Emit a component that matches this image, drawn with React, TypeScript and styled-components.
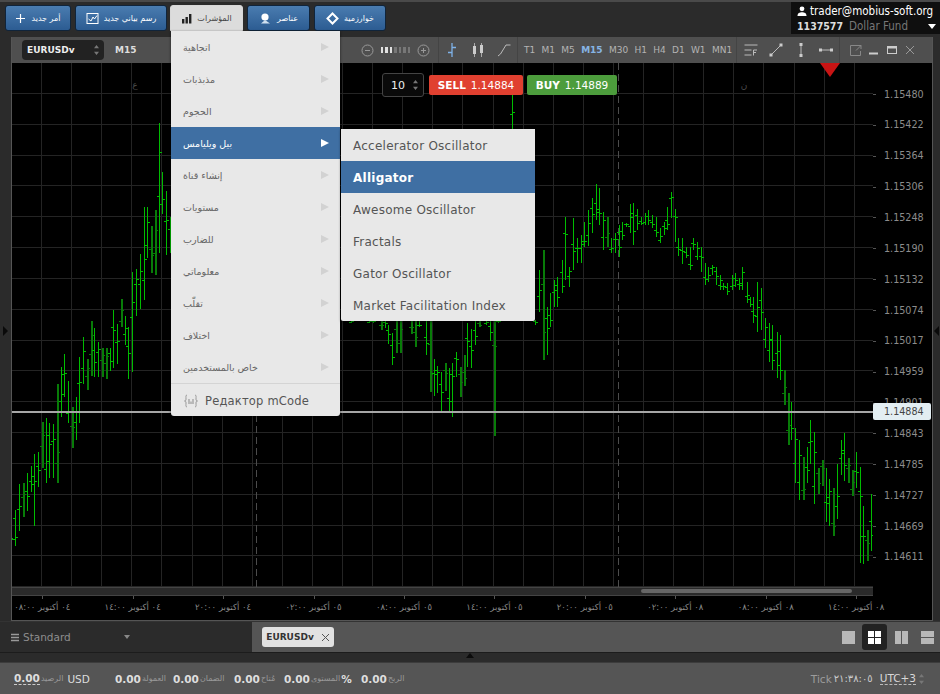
import type { ReactNode } from "react";
import styled, { createGlobalStyle } from "styled-components";

const GlobalStyle = createGlobalStyle`
  html, body, #root {
    margin: 0;
    padding: 0;
    height: 100%;
    background: #2b2b2b;
    overflow: hidden;
    font-family: "DejaVu Sans", sans-serif;
  }
`;

const Page = styled.div`
  width: 940px;
  height: 694px;
  display: flex;
  flex-direction: column;
  background: #2b2b2b;
  border-top: 2px solid #4a4a4a;
  box-sizing: border-box;
`;

const TopBar = styled.div`
  height: 35px;
  display: flex;
  align-items: flex-start;
  padding: 3px 0 0 5px;
  box-sizing: border-box;
  flex-shrink: 0;
`;

const NavButton = styled.div<{ $width: number; $open?: boolean; $after: number }>`
  position: relative;
  width: ${(p) => p.$width}px;
  height: 26px;
  margin-right: ${(p) => p.$after}px;
  box-sizing: border-box;
  display: flex;
  align-items: center;
  justify-content: center;
  gap: 5px;
  border: 1px solid ${(p) => (p.$open ? "#d8d8d8" : "#10243a")};
  border-radius: 3px 3px ${(p) => (p.$open ? "0 0" : "3px 3px")};
  background: ${(p) => (p.$open ? "#dcdcdc" : "linear-gradient(#4a7cb0, #2c5c92)")};
  color: ${(p) => (p.$open ? "#444" : "#fff")};
  font-size: 8px;
  white-space: nowrap;
`;

const Menu = styled.div`
  position: absolute;
  top: 25px;
  left: 0;
  width: 169px;
  background: #e8e8e8;
  border-radius: 0 0 3px 3px;
  box-shadow: 0 1px 3px rgba(0, 0, 0, 0.6);
  z-index: 5;
`;

const MenuRow = styled.div<{ $active?: boolean }>`
  position: relative;
  height: 32px;
  display: flex;
  align-items: center;
  justify-content: space-between;
  padding: 0 11px 0 12px;
  font-size: 9.5px;
  color: ${(p) => (p.$active ? "#fff" : "#666")};
  background: ${(p) => (p.$active ? "#3f6fa3" : "transparent")};
`;

const MenuArrow = styled.span<{ $active?: boolean }>`
  width: 0;
  height: 0;
  border-style: solid;
  border-width: 4px 0 4px 8px;
  border-color: transparent transparent transparent ${(p) => (p.$active ? "#fff" : "#d2d2d2")};
`;

const EditorRow = styled.div`
  height: 33px;
  display: flex;
  align-items: center;
  gap: 6px;
  padding: 1px 0 0 12px;
  box-sizing: border-box;
  border-top: 1px solid #d4d4d4;
  font-size: 11.5px;
  letter-spacing: 0.2px;
  color: #555;
`;

const SubMenu = styled.div`
  position: absolute;
  top: 2px;
  left: 170px;
  width: 194px;
  background: #e8e8e8;
  border-radius: 0 0 2px 2px;
  box-shadow: 0 1px 3px rgba(0, 0, 0, 0.6);
  z-index: 6;
`;

const SubRow = styled.div<{ $active?: boolean }>`
  height: 32px;
  display: flex;
  align-items: center;
  padding: 2px 0 0 12px;
  box-sizing: border-box;
  font-size: 12px;
  letter-spacing: 0.25px;
  font-weight: ${(p) => (p.$active ? 700 : 400)};
  color: ${(p) => (p.$active ? "#fff" : "#555")};
  background: ${(p) => (p.$active ? "#3f6fa3" : "transparent")};
`;

const Account = styled.div`
  margin: -3px 0 0 auto;
  width: 149px;
  height: 32px;
  box-sizing: border-box;
  background: #0f0f0f;
  padding: 1px 0 0 6px;
  font-family: "DejaVu Sans Condensed", "DejaVu Sans", sans-serif;
`;

const AccountUser = styled.div`
  display: flex;
  align-items: center;
  gap: 3px;
  height: 15px;
  color: #fff;
  font-size: 11.5px;
`;

const AccountFund = styled.div`
  display: flex;
  align-items: center;
  gap: 6px;
  height: 16px;
  font-size: 11.5px;
  color: #777;
`;

const AccountId = styled.b`
  color: #ddd;
  font-size: 10.5px;
`;

const FundArrow = styled.span`
  margin-left: auto;
  margin-right: 4px;
  width: 0;
  height: 0;
  border-style: solid;
  border-width: 5px 4px 0 4px;
  border-color: #fff transparent transparent transparent;
`;

const Workspace = styled.div`
  flex: 1;
  display: flex;
  min-height: 0;
`;

const Gutter = styled.div<{ $width: number }>`
  width: ${(p) => p.$width}px;
  flex-shrink: 0;
  display: flex;
  align-items: center;
  justify-content: center;
  background: #2b2b2b;
  padding-top: 4px;
  box-sizing: border-box;
`;

const GutterArrow = styled.span<{ $left?: boolean }>`
  width: 0;
  height: 0;
  border-style: solid;
  border-width: ${(p) => (p.$left ? "5px 5px 5px 0" : "5px 0 5px 5px")};
  border-color: ${(p) =>
    p.$left
      ? "transparent #0a0a0a transparent transparent"
      : "transparent transparent transparent #0a0a0a"};
`;

const ChartWindow = styled.div`
  flex: 1;
  display: flex;
  flex-direction: column;
  border: 1px solid #555;
  border-top: none;
  min-width: 0;
`;

const ChartHeader = styled.div`
  height: 26px;
  display: flex;
  align-items: stretch;
  background: #4f4f4f;
  flex-shrink: 0;
`;

const HeaderGroup = styled.div<{ $width: number; $gap?: number; $pad?: number; $line?: boolean }>`
  width: ${(p) => p.$width}px;
  flex-shrink: 0;
  box-sizing: border-box;
  display: flex;
  align-items: center;
  gap: ${(p) => p.$gap ?? 0}px;
  padding-left: ${(p) => p.$pad ?? 0}px;
  border-right: ${(p) => (p.$line ? "1px solid #444" : "none")};
`;

const SymbolSelect = styled.div`
  width: 82px;
  height: 20px;
  box-sizing: border-box;
  display: flex;
  align-items: center;
  justify-content: space-between;
  padding: 0 4px 0 5px;
  background: #222;
  border-radius: 4px;
  color: #eee;
  font-size: 9px;
  font-weight: 700;
`;

const Timeframe = styled.span<{ $active?: boolean }>`
  font-size: 9px;
  font-weight: ${(p) => (p.$active ? 700 : 400)};
  color: ${(p) => (p.$active ? "#86b4e4" : "#b4b4b4")};
`;

const CurrentFrame = styled.span`
  margin-left: 11px;
  font-size: 9px;
  font-weight: 700;
  color: #ddd;
`;

const ZoomBox = styled.div`
  margin-left: auto;
  padding-right: 8px;
  display: flex;
  align-items: center;
  gap: 7px;
`;

const ZoomTicks = styled.div`
  display: flex;
  gap: 2px;
`;

const ZoomTick = styled.span<{ $on: boolean }>`
  width: 2.5px;
  height: 6px;
  background: ${(p) => (p.$on ? "#e0e0e0" : "#777")};
`;

const ChartRow = styled.div`
  flex: 1;
  display: flex;
  min-height: 0;
  background: #000;
`;

const Plot = styled.div`
  position: relative;
  width: 861px;
  flex-shrink: 0;
`;

const PlotSvg = styled.svg`
  display: block;
  width: 861px;
  height: 524px;
`;

const OrderBox = styled.div`
  position: absolute;
  top: 10px;
  left: 370px;
  display: flex;
  align-items: center;
  gap: 4px;
`;

const QtyBox = styled.div`
  width: 42px;
  height: 24px;
  margin-right: 1px;
  box-sizing: border-box;
  display: flex;
  align-items: center;
  justify-content: space-between;
  padding: 0 4px 0 8px;
  background: #0a0a0a;
  border: 1px solid #444;
  border-radius: 3px;
  color: #eee;
  font-size: 11px;
`;

const TradeButton = styled.div<{ $width: number; $color: string }>`
  width: ${(p) => p.$width}px;
  height: 20px;
  display: flex;
  align-items: center;
  justify-content: center;
  gap: 5px;
  border-radius: 2px;
  background: ${(p) => p.$color};
  color: #fff;
  font-size: 10.5px;
  white-space: nowrap;
`;

const PriceScale = styled.div`
  position: relative;
  flex: 1;
  padding-top: 15.6px;
  box-sizing: border-box;
  background: #000;
  overflow: hidden;
`;

const PriceRow = styled.div`
  position: relative;
  height: 30.87px;
  display: flex;
  align-items: center;
  padding-left: 11px;
  color: #8c8c8c;
  font-size: 9.6px;

  &::before {
    content: "";
    position: absolute;
    left: 0;
    top: 50%;
    width: 3px;
    border-top: 1px solid #555;
  }
`;

const LastPrice = styled.div`
  position: absolute;
  top: 340px;
  left: 0;
  width: 58px;
  height: 17px;
  display: flex;
  align-items: center;
  padding-left: 11px;
  box-sizing: border-box;
  background: #e3eef2;
  border-radius: 2px;
  color: #444;
  font-size: 9.6px;
`;

const ScrollRow = styled.div`
  height: 9px;
  background: #000;
  flex-shrink: 0;
`;

const ScrollTrack = styled.div`
  width: 861px;
  height: 9px;
  box-sizing: border-box;
  background: #2a2a2a;
  border-top: 1px solid #444;
  border-bottom: 1px solid #444;
  padding: 1px 0 0 629px;
`;

const ScrollThumb = styled.div`
  width: 211px;
  height: 4px;
  background: #666;
  border-radius: 2px;
`;

const TimeAxis = styled.div`
  height: 24px;
  flex-shrink: 0;
  background: #000;
  display: grid;
  grid-template-columns: repeat(10, 90.45px);
  overflow: hidden;
`;

const TimeCell = styled.div`
  position: relative;
  display: flex;
  justify-content: center;
  padding-top: 6px;
  box-sizing: border-box;
  color: #888;
  font-size: 8.5px;
  white-space: nowrap;
  transform: translateX(-15px);

  &::before {
    content: "";
    position: absolute;
    top: 0;
    left: 50%;
    height: 3px;
    border-left: 1px solid #555;
  }
`;

const TabsBar = styled.div`
  height: 31px;
  display: flex;
  flex-shrink: 0;
  background: #555;
  border-top: 1px solid #333;
  box-sizing: border-box;
`;

const Preset = styled.div`
  width: 252px;
  display: flex;
  align-items: center;
  gap: 3px;
  padding-left: 11px;
  box-sizing: border-box;
  background: #2b2b2b;
  color: #8e8e8e;
  font-size: 10.5px;
`;

const PresetArrow = styled.span`
  margin-left: 50px;
  width: 0;
  height: 0;
  border-style: solid;
  border-width: 4px 3.5px 0 3.5px;
  border-color: #888 transparent transparent transparent;
`;

const TabStrip = styled.div`
  flex: 1;
  display: flex;
  align-items: center;
  padding-left: 10px;
`;

const ChartTab = styled.div`
  width: 72px;
  height: 20px;
  display: flex;
  align-items: center;
  justify-content: center;
  gap: 7px;
  border-radius: 3px;
  background: #e2e2e2;
  color: #333;
  font-size: 9px;
  font-weight: 700;
`;

const LayoutSwitch = styled.div`
  margin-left: auto;
  display: flex;
  align-items: center;
  gap: 1.5px;
`;

const LayoutButton = styled.div<{ $active?: boolean }>`
  width: 25px;
  height: 26px;
  display: flex;
  align-items: center;
  justify-content: center;
  border-radius: 3px;
  background: ${(p) => (p.$active ? "#222" : "transparent")};
  color: ${(p) => (p.$active ? "#fff" : "#b8b8b8")};
`;

const Divider = styled.div`
  height: 10px;
  flex-shrink: 0;
  display: flex;
  justify-content: center;
  background: #2b2b2b;
  border-top: 1px solid #1c1c1c;
  box-sizing: border-box;
`;

const DividerArrow = styled.span`
  width: 0;
  height: 0;
  border-style: solid;
  border-width: 0 4px 5px 4px;
  border-color: transparent transparent #0c0c0c transparent;
`;

const StatusBar = styled.div`
  height: 32px;
  flex-shrink: 0;
  display: flex;
  align-items: center;
  padding: 0 15px 0 14px;
  background: #555;
  border-top: 1px solid #3c3c3c;
  box-sizing: border-box;
`;

const Stat = styled.div<{ $width: number }>`
  width: ${(p) => p.$width}px;
  display: flex;
  align-items: center;
  gap: 1px;
`;

const StatValue = styled.b<{ $dotted?: boolean }>`
  color: #dedede;
  font-size: 10.5px;
  border-bottom: ${(p) => (p.$dotted ? "1px dashed #ccc" : "none")};
`;

const StatLabel = styled.span`
  color: #999;
  font-size: 8px;
`;

const StatUnit = styled.span`
  margin-left: 3px;
  color: #ddd;
  font-size: 10.5px;
`;

const Clock = styled.div`
  margin-left: auto;
  display: flex;
  align-items: center;
  gap: 2px;
  color: #9c9c9c;
  font-size: 10.5px;
`;

const ClockTime = styled.span`
  color: #ccc;
  font-size: 10px;
`;

const Zone = styled.span`
  margin-left: 5px;
  color: #d8d8d8;
  font-size: 10.5px;
  border-bottom: 1px dashed #bbb;
`;

type Bar = [number, number, number, number?];

// x, top, bottom, dark flag (coordinates are page pixels)
const BARS: Bar[] = [
  [12, 538, 540], [15, 510, 546], [19, 484, 531], [23, 483, 517, 1], [27, 473, 511], [31, 466, 492],
  [34, 454, 526], [38, 452, 487], [42, 422, 468, 1], [46, 418, 483], [49, 423, 478], [53, 424, 478],
  [57, 384, 483, 1], [61, 367, 417], [64, 354, 397], [68, 381, 423], [72, 407, 448, 1], [76, 397, 440],
  [79, 357, 423], [83, 337, 384], [87, 359, 390, 1], [91, 321, 376, 1], [94, 328, 377], [98, 342, 377],
  [102, 348, 377, 1], [106, 348, 379, 1], [110, 348, 371], [113, 310, 368], [117, 324, 364], [121, 299, 327, 1],
  [125, 316, 345], [128, 327, 379], [132, 272, 372], [136, 269, 316], [140, 254, 309], [144, 207, 300],
  [147, 207, 258], [151, 226, 273, 1], [155, 210, 275, 1], [159, 123, 253], [162, 172, 214], [166, 191, 255],
  [170, 217, 253],
  [351, 320, 323], [369, 320, 323], [373, 320, 323], [381, 320, 330, 1], [385, 320, 328], [388, 325, 344],
  [392, 333, 365], [396, 320, 353, 1], [400, 320, 353, 1], [411, 320, 334, 1], [415, 320, 347, 1], [419, 320, 327],
  [426, 320, 355], [430, 320, 392, 1], [434, 359, 396], [437, 366, 393], [441, 372, 412], [445, 363, 391, 1],
  [449, 368, 412], [452, 363, 417], [456, 352, 377], [460, 367, 397, 1], [464, 355, 386, 1], [467, 323, 367],
  [471, 329, 368], [475, 320, 345], [479, 320, 327, 1], [486, 320, 325], [490, 320, 341], [494, 320, 436, 1],
  [498, 320, 323], [512, 95, 130], [535, 320, 325], [539, 270, 312],
  [543, 250, 360, 1], [547, 307, 355], [550, 293, 327], [554, 280, 307], [557, 277, 307], [562, 260, 293],
  [565, 217, 280], [569, 267, 287], [573, 218, 270], [577, 238, 263], [581, 235, 263], [584, 222, 247],
  [588, 210, 246], [592, 198, 233], [596, 184, 220], [599, 188, 225], [603, 212, 250], [607, 217, 247, 1],
  [611, 238, 253], [615, 233, 253], [619, 225, 257], [622, 222, 240], [626, 223, 227], [630, 204, 233],
  [633, 203, 245], [637, 209, 230], [641, 217, 225], [645, 213, 225], [648, 210, 225], [652, 215, 228],
  [656, 217, 237], [660, 228, 243], [664, 222, 235], [667, 207, 230], [671, 192, 218], [675, 209, 242],
  [678, 238, 256], [682, 238, 264], [686, 247, 258], [690, 247, 270], [693, 238, 250], [697, 242, 260],
  [701, 247, 272], [705, 263, 285], [708, 267, 282], [712, 265, 275], [716, 267, 285], [720, 275, 290],
  [723, 283, 290], [727, 283, 295], [732, 275, 290], [735, 273, 287], [739, 278, 290], [742, 267, 290],
  [747, 282, 303], [750, 297, 307], [753, 297, 323], [757, 282, 332], [761, 288, 330], [765, 318, 348],
  [769, 323, 362], [772, 325, 370], [777, 332, 378], [780, 335, 380], [784, 370, 405, 1], [788, 393, 445, 1],
  [791, 402, 440], [795, 428, 483], [799, 440, 500], [803, 457, 500, 1], [807, 447, 483], [810, 420, 464],
  [814, 432, 504], [818, 468, 494, 1], [822, 460, 486, 1], [826, 468, 522], [829, 479, 526], [833, 488, 536, 1],
  [837, 464, 519], [841, 440, 475], [844, 433, 481], [848, 458, 483, 1], [852, 470, 496, 1], [856, 452, 488],
  [860, 467, 563], [863, 506, 564], [867, 530, 561, 1], [871, 494, 551],
];

const PRICES = [
  "1.15480", "1.15422", "1.15364", "1.15306", "1.15248", "1.15190", "1.15132", "1.15074",
  "1.15017", "1.14959", "1.14901", "1.14843", "1.14785", "1.14727", "1.14669", "1.14611",
];

const TIMES = [
  "٠٤ أكتوبر ٠٨:٠٠", "٠٤ أكتوبر ١٤:٠٠", "٠٤ أكتوبر ٢٠:٠٠", "٠٥ أكتوبر ٠٢:٠٠", "٠٥ أكتوبر ٠٨:٠٠",
  "٠٥ أكتوبر ١٤:٠٠", "٠٥ أكتوبر ٢٠:٠٠", "٠٨ أكتوبر ٠٢:٠٠", "٠٨ أكتوبر ٠٨:٠٠", "٠٨ أكتوبر ١٤:٠٠",
];

const INDICATORS = [
  "اتجاهية", "مذبذبات", "الحجوم", "بيل ويليامس", "إنشاء قناة", "مستويات",
  "للضارب", "معلوماتي", "تقلّب", "اختلاف", "خاص بالمستخدمين",
];

const WILLIAMS = [
  "Accelerator Oscillator", "Alligator", "Awesome Oscillator", "Fractals", "Gator Oscillator",
  "Market Facilitation Index",
];

const FRAMES = ["T1", "M1", "M5", "M15", "M30", "H1", "H4", "D1", "W1", "MN1"];

const frac = (n: number) => {
  const v = Math.sin(n * 12.9898) * 43758.5453;
  return v - Math.floor(v);
};

const Chart = () => {
  const vertical = Array.from({ length: 28 }, (_, i) => 41.5 + i * 30.1);
  const horizontal = Array.from({ length: 17 }, (_, i) => 93.5 + i * 30.83);
  return (
    <PlotSvg viewBox="12 63 861 524" shapeRendering="crispEdges">
      {vertical.map((x) => (
        <line key={x} x1={x} x2={x} y1={63} y2={587} stroke="#242424" />
      ))}
      {horizontal.map((y) => (
        <line key={y} x1={12} x2={873} y1={y} y2={y} stroke="#242424" />
      ))}
      <line x1={256.5} x2={256.5} y1={63} y2={587} stroke="#4c4c4c" strokeDasharray="7 4" />
      <line x1={618.5} x2={618.5} y1={63} y2={587} stroke="#4c4c4c" strokeDasharray="7 4" />
      <text x={135} y={88} fontSize={9} fill="#4a4a4a" textAnchor="middle" fontFamily="DejaVu Sans">ع</text>
      <text x={744} y={88} fontSize={9} fill="#4a4a4a" textAnchor="middle" fontFamily="DejaVu Sans">ن</text>
      {BARS.map(([x, top, bottom, dark], i) => {
        const color = dark ? "#087c08" : "#00bc00";
        const span = bottom - top;
        const open = Math.round(top + span * (0.2 + 0.6 * frac(i + 1)));
        const close = Math.round(top + span * (0.2 + 0.6 * frac(i + 40)));
        return (
          <g key={i} stroke={color}>
            <line x1={x + 0.5} x2={x + 0.5} y1={top} y2={bottom} strokeWidth={dark ? 2 : 1} />
            <line x1={x - 2} x2={x} y1={open + 0.5} y2={open + 0.5} />
            <line x1={x} x2={x + 3} y1={close + 0.5} y2={close + 0.5} />
          </g>
        );
      })}
      <line x1={12} x2={873} y1={411.5} y2={411.5} stroke="#a6a6a6" strokeWidth={2} />
      <polygon points="820,63 840,63 830,77" fill="#c81414" shapeRendering="auto" />
    </PlotSvg>
  );
};

const Spinner = ({ color }: { color: string }) => (
  <svg width="7" height="12" viewBox="0 0 7 12">
    <path d="M3.5 1 6 4.2H1zM3.5 11 1 7.8h5z" fill={color} />
  </svg>
);

const Ico = styled.svg`
  display: block;
  flex-shrink: 0;
`;

const ToolIcon = ({ children, size = 16, vb = 16 }: { children: ReactNode; size?: number; vb?: number }) => (
  <Ico width={size} height={size} viewBox={`0 0 ${vb} ${vb}`} fill="none">
    {children}
  </Ico>
);

const App = () => {
  return (
    <Page>
      <GlobalStyle />
      <TopBar>
        <NavButton $width={66} $after={4}>
          <ToolIcon size={11} vb={11}>
            <path d="M5.5 1v9M1 5.5h9" stroke="#fff" strokeWidth="1.2" />
          </ToolIcon>
          <span dir="rtl">أمر جديد</span>
        </NavButton>
        <NavButton $width={92} $after={3}>
          <ToolIcon size={13} vb={13}>
            <rect x="1" y="1.5" width="11" height="10" stroke="#fff" />
            <path d="M2.5 7 5 9l2-4 1.5 2L11 3.5" stroke="#fff" />
          </ToolIcon>
          <span dir="rtl">رسم بياني جديد</span>
        </NavButton>
        <NavButton $width={73} $after={4} $open>
          <ToolIcon size={11} vb={11}>
            <path d="M1 6h2.4v4.5H1zM4.5 4h2.4v6.5H4.5zM8 1h2.4v9.5H8z" fill="#222" />
          </ToolIcon>
          <span dir="rtl">المؤشرات</span>
          <Menu>
            {INDICATORS.map((label) => (
              <MenuRow key={label} $active={label === "بيل ويليامس"}>
                <span dir="rtl">{label}</span>
                <MenuArrow $active={label === "بيل ويليامس"} />
                {label === "بيل ويليامس" && (
                  <SubMenu>
                    {WILLIAMS.map((name) => (
                      <SubRow key={name} $active={name === "Alligator"}>{name}</SubRow>
                    ))}
                  </SubMenu>
                )}
              </MenuRow>
            ))}
            <EditorRow>
              <ToolIcon size={16} vb={16}>
                <path d="M4 2C2.5 2 3 4 3 6c0 1.5-.5 2-1.5 2C2.5 8 3 8.5 3 10c0 2-.5 4 1 4M12 2c1.5 0 1 2 1 4 0 1.5.5 2 1.5 2-1 0-1.5.5-1.5 2 0 2 .5 4-1 4" stroke="#999" />
                <path d="M6 6v5M8 8.5V11M10 6v5" stroke="#999" strokeWidth="1.2" />
              </ToolIcon>
              <span>Редактор mCode</span>
            </EditorRow>
          </Menu>
        </NavButton>
        <NavButton $width={63} $after={4}>
          <ToolIcon size={13} vb={13}>
            <circle cx="6" cy="5" r="3.6" fill="#fff" />
            <path d="M2 11.5 6 8l5 3.5z" fill="#cfe0f0" />
          </ToolIcon>
          <span dir="rtl">عناصر</span>
        </NavButton>
        <NavButton $width={72} $after={0}>
          <ToolIcon size={13} vb={13}>
            <path d="M6.5 1.5 11.5 6.5 6.5 11.5 1.5 6.5z" stroke="#fff" strokeWidth="2" />
          </ToolIcon>
          <span dir="rtl">خوارزمية</span>
        </NavButton>
        <Account>
          <AccountUser>
            <ToolIcon size={10} vb={10}>
              <circle cx="5" cy="2.8" r="2.4" fill="#fff" />
              <path d="M.5 10c0-3 2-3.800 4.500-3.800S9.500 7 9.500 10z" fill="#fff" />
            </ToolIcon>
            trader@mobius-soft.org
          </AccountUser>
          <AccountFund>
            <AccountId>1137577</AccountId>
            Dollar Fund
            <FundArrow />
          </AccountFund>
        </Account>
      </TopBar>
      <Workspace>
        <Gutter $width={11}>
          <GutterArrow />
        </Gutter>
        <ChartWindow>
          <ChartHeader>
            <HeaderGroup $width={427} $pad={10} $line>
              <SymbolSelect>
                EURUSDv
                <Spinner color="#777" />
              </SymbolSelect>
              <CurrentFrame>M15</CurrentFrame>
              <ZoomBox>
                <ToolIcon size={13} vb={13}>
                  <circle cx="6.5" cy="6.5" r="5.5" stroke="#999" />
                  <path d="M4 6.5h5" stroke="#999" />
                </ToolIcon>
                <ZoomTicks>
                  {[1, 1, 1, 0, 0, 0, 0].map((on, i) => (
                    <ZoomTick key={i} $on={!!on} />
                  ))}
                </ZoomTicks>
                <ToolIcon size={13} vb={13}>
                  <circle cx="6.5" cy="6.5" r="5.5" stroke="#999" />
                  <path d="M4 6.5h5M6.5 4v5" stroke="#999" />
                </ToolIcon>
              </ZoomBox>
            </HeaderGroup>
            <HeaderGroup $width={79} $gap={10} $pad={5} $line>
              <ToolIcon>
                <path d="M8 1v14M4 10.5h4M8 5.5h4" stroke="#7fb2e8" strokeWidth="1.3" />
              </ToolIcon>
              <ToolIcon>
                <path d="M4.5 1v14M11.5 1v14" stroke="#aaa" />
                <rect x="3" y="4" width="3" height="8" fill="#ccc" />
                <rect x="10" y="3" width="3" height="8" fill="#ccc" />
              </ToolIcon>
              <ToolIcon>
                <path d="M2 14l2.5-2L10 3h4.5" stroke="#bbb" />
              </ToolIcon>
            </HeaderGroup>
            <HeaderGroup $width={219} $gap={6.3} $pad={6} $line>
              {FRAMES.map((label) => (
                <Timeframe key={label} $active={label === "M15"}>{label}</Timeframe>
              ))}
            </HeaderGroup>
            <HeaderGroup $width={103} $gap={9} $pad={6} $line>
              <ToolIcon>
                <path d="M1.5 3h13M1.5 8h7M1.5 13h7" stroke="#bbb" />
                <path d="M10.5 13.5V8h3.5M10.5 10.5H13" stroke="#bbb" />
              </ToolIcon>
              <ToolIcon>
                <path d="M3 13 13 3" stroke="#bbb" />
                <rect x="1.5" y="11.5" width="3" height="3" fill="#ccc" />
                <rect x="11.5" y="1.5" width="3" height="3" fill="#ccc" />
              </ToolIcon>
              <ToolIcon>
                <path d="M8 2v12" stroke="#bbb" />
                <rect x="6.5" y="1" width="3" height="3" fill="#ccc" />
                <rect x="6.5" y="12" width="3" height="3" fill="#ccc" />
              </ToolIcon>
              <ToolIcon>
                <path d="M2 8h12" stroke="#bbb" />
                <rect x="1" y="6.5" width="3" height="3" fill="#ccc" />
                <rect x="12" y="6.5" width="3" height="3" fill="#ccc" />
              </ToolIcon>
            </HeaderGroup>
            <HeaderGroup $width={92} $gap={6} $pad={9}>
              <ToolIcon size={13} vb={13}>
                <path d="M9 1.5H1.5v10h10V7M7 6.5 12 1.5M8.5 1.5H12V5" stroke="#888" />
              </ToolIcon>
              <ToolIcon size={12} vb={12}>
                <path d="M1 9.5h9" stroke="#ccc" strokeWidth="2" />
              </ToolIcon>
              <ToolIcon size={12} vb={12}>
                <rect x="1.5" y="2.5" width="9" height="7" stroke="#ccc" />
                <path d="M1.5 3.5h9" stroke="#ccc" strokeWidth="2" />
              </ToolIcon>
              <ToolIcon size={12} vb={12}>
                <path d="M2 2l8 8M10 2l-8 8" stroke="#999" />
              </ToolIcon>
            </HeaderGroup>
          </ChartHeader>
          <ChartRow>
            <Plot>
              <Chart />
              <OrderBox>
                <QtyBox>
                  10
                  <Spinner color="#777" />
                </QtyBox>
                <TradeButton $width={94} $color="#e04030">
                  <b>SELL</b> 1.14884
                </TradeButton>
                <TradeButton $width={90} $color="#4c9c3c">
                  <b>BUY</b> 1.14889
                </TradeButton>
              </OrderBox>
            </Plot>
            <PriceScale>
              {PRICES.map((price) => (
                <PriceRow key={price}>{price}</PriceRow>
              ))}
              <LastPrice>1.14884</LastPrice>
            </PriceScale>
          </ChartRow>
          <ScrollRow>
            <ScrollTrack>
              <ScrollThumb />
            </ScrollTrack>
          </ScrollRow>
          <TimeAxis>
            {TIMES.map((time) => (
              <TimeCell key={time} dir="rtl">{time}</TimeCell>
            ))}
          </TimeAxis>
        </ChartWindow>
        <Gutter $width={7}>
          <GutterArrow $left />
        </Gutter>
      </Workspace>
      <TabsBar>
        <Preset>
          <ToolIcon size={9} vb={9}>
            <path d="M0 1.5h8M0 4.5h8M0 7.5h8" stroke="#999" strokeWidth="1.4" />
          </ToolIcon>
          Standard
          <PresetArrow />
        </Preset>
        <TabStrip>
          <ChartTab>
            EURUSDv
            <ToolIcon size={9} vb={9}>
              <path d="M1 1l7 7M8 1 1 8" stroke="#555" />
            </ToolIcon>
          </ChartTab>
          <LayoutSwitch>
            <LayoutButton>
              <ToolIcon size={13} vb={13}><rect width="13" height="13" fill="currentColor" /></ToolIcon>
            </LayoutButton>
            <LayoutButton $active>
              <ToolIcon size={13} vb={13}>
                <path d="M0 0h6v6H0zM7 0h6v6H7zM0 7h6v6H0zM7 7h6v6H7z" fill="currentColor" />
              </ToolIcon>
            </LayoutButton>
            <LayoutButton>
              <ToolIcon size={13} vb={13}>
                <path d="M0 0h6v13H0zM7 0h6v13H7z" fill="currentColor" />
              </ToolIcon>
            </LayoutButton>
            <LayoutButton>
              <ToolIcon size={13} vb={13}>
                <path d="M0 0h13v6H0zM0 7h13v6H0z" fill="currentColor" />
              </ToolIcon>
            </LayoutButton>
          </LayoutSwitch>
        </TabStrip>
      </TabsBar>
      <Divider>
        <DividerArrow />
      </Divider>
      <StatusBar>
        <Stat $width={101}>
          <StatValue $dotted>0.00</StatValue>
          <StatLabel dir="rtl">الرصيد</StatLabel>
          <StatUnit>USD</StatUnit>
        </Stat>
        <Stat $width={58}><StatValue>0.00</StatValue><StatLabel dir="rtl">العمولة</StatLabel></Stat>
        <Stat $width={61}><StatValue>0.00</StatValue><StatLabel dir="rtl">الضمان</StatLabel></Stat>
        <Stat $width={50}><StatValue>0.00</StatValue><StatLabel dir="rtl">مُتاح</StatLabel></Stat>
        <Stat $width={77}>
          <StatValue>0.00</StatValue>
          <StatLabel dir="rtl">المستوى</StatLabel>
          <StatValue>%</StatValue>
        </Stat>
        <Stat $width={60}><StatValue>0.00</StatValue><StatLabel dir="rtl">الربح</StatLabel></Stat>
        <Clock>
          Tick <ClockTime>٢١:٣٨:٠٥</ClockTime>
          <Zone>UTC+3</Zone>
          <Spinner color="#777" />
        </Clock>
      </StatusBar>
    </Page>
  );
};

export default App;
